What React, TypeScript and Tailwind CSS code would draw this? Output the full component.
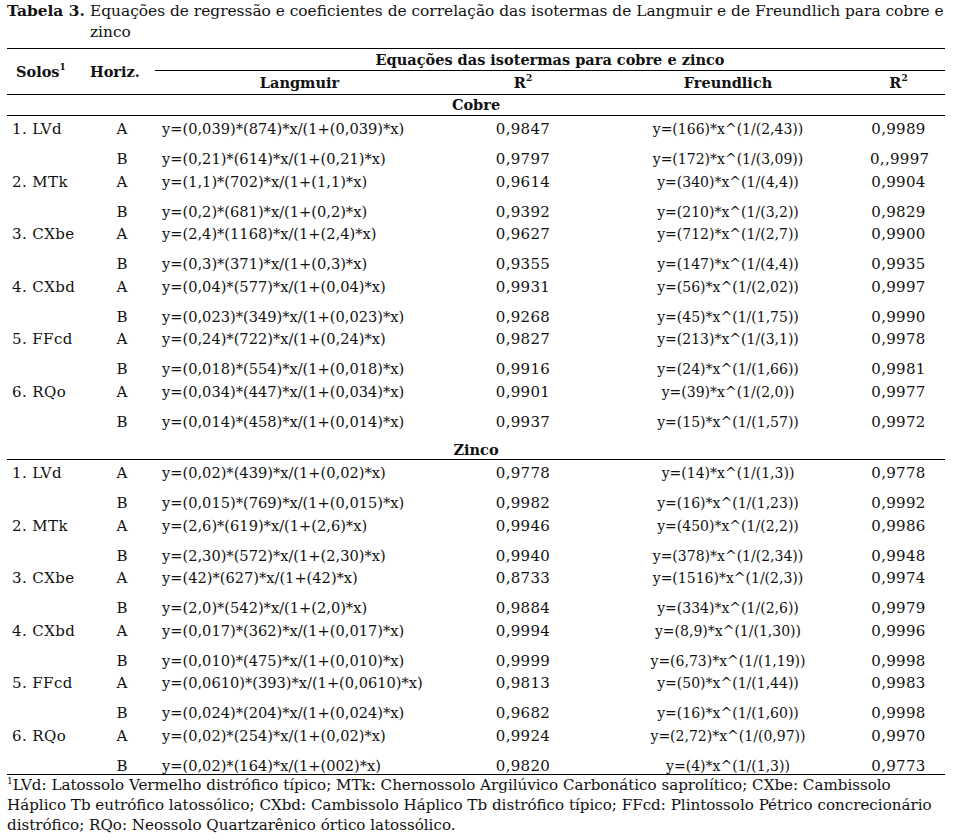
const serif = { fontFamily: '"DejaVu Serif", "Liberation Serif", serif' };

type Row = { solo?: string; h: string; lang: string; r1: string; freu: string; r2: string };

const cobre: Row[] = [
  { solo: "1. LVd", h: "A", lang: "y=(0,039)*(874)*x/(1+(0,039)*x)", r1: "0,9847", freu: "y=(166)*x^(1/(2,43))", r2: "0,9989" },
  { h: "B", lang: "y=(0,21)*(614)*x/(1+(0,21)*x)", r1: "0,9797", freu: "y=(172)*x^(1/(3,09))", r2: "0,,9997" },
  { solo: "2. MTk", h: "A", lang: "y=(1,1)*(702)*x/(1+(1,1)*x)", r1: "0,9614", freu: "y=(340)*x^(1/(4,4))", r2: "0,9904" },
  { h: "B", lang: "y=(0,2)*(681)*x/(1+(0,2)*x)", r1: "0,9392", freu: "y=(210)*x^(1/(3,2))", r2: "0,9829" },
  { solo: "3. CXbe", h: "A", lang: "y=(2,4)*(1168)*x/(1+(2,4)*x)", r1: "0,9627", freu: "y=(712)*x^(1/(2,7))", r2: "0,9900" },
  { h: "B", lang: "y=(0,3)*(371)*x/(1+(0,3)*x)", r1: "0,9355", freu: "y=(147)*x^(1/(4,4))", r2: "0,9935" },
  { solo: "4. CXbd", h: "A", lang: "y=(0,04)*(577)*x/(1+(0,04)*x)", r1: "0,9931", freu: "y=(56)*x^(1/(2,02))", r2: "0,9997" },
  { h: "B", lang: "y=(0,023)*(349)*x/(1+(0,023)*x)", r1: "0,9268", freu: "y=(45)*x^(1/(1,75))", r2: "0,9990" },
  { solo: "5. FFcd", h: "A", lang: "y=(0,24)*(722)*x/(1+(0,24)*x)", r1: "0,9827", freu: "y=(213)*x^(1/(3,1))", r2: "0,9978" },
  { h: "B", lang: "y=(0,018)*(554)*x/(1+(0,018)*x)", r1: "0,9916", freu: "y=(24)*x^(1/(1,66))", r2: "0,9981" },
  { solo: "6. RQo", h: "A", lang: "y=(0,034)*(447)*x/(1+(0,034)*x)", r1: "0,9901", freu: "y=(39)*x^(1/(2,0))", r2: "0,9977" },
  { h: "B", lang: "y=(0,014)*(458)*x/(1+(0,014)*x)", r1: "0,9937", freu: "y=(15)*x^(1/(1,57))", r2: "0,9972" },
];

const zinco: Row[] = [
  { solo: "1. LVd", h: "A", lang: "y=(0,02)*(439)*x/(1+(0,02)*x)", r1: "0,9778", freu: "y=(14)*x^(1/(1,3))", r2: "0,9778" },
  { h: "B", lang: "y=(0,015)*(769)*x/(1+(0,015)*x)", r1: "0,9982", freu: "y=(16)*x^(1/(1,23))", r2: "0,9992" },
  { solo: "2. MTk", h: "A", lang: "y=(2,6)*(619)*x/(1+(2,6)*x)", r1: "0,9946", freu: "y=(450)*x^(1/(2,2))", r2: "0,9986" },
  { h: "B", lang: "y=(2,30)*(572)*x/(1+(2,30)*x)", r1: "0,9940", freu: "y=(378)*x^(1/(2,34))", r2: "0,9948" },
  { solo: "3. CXbe", h: "A", lang: "y=(42)*(627)*x/(1+(42)*x)", r1: "0,8733", freu: "y=(1516)*x^(1/(2,3))", r2: "0,9974" },
  { h: "B", lang: "y=(2,0)*(542)*x/(1+(2,0)*x)", r1: "0,9884", freu: "y=(334)*x^(1/(2,6))", r2: "0,9979" },
  { solo: "4. CXbd", h: "A", lang: "y=(0,017)*(362)*x/(1+(0,017)*x)", r1: "0,9994", freu: "y=(8,9)*x^(1/(1,30))", r2: "0,9996" },
  { h: "B", lang: "y=(0,010)*(475)*x/(1+(0,010)*x)", r1: "0,9999", freu: "y=(6,73)*x^(1/(1,19))", r2: "0,9998" },
  { solo: "5. FFcd", h: "A", lang: "y=(0,0610)*(393)*x/(1+(0,0610)*x)", r1: "0,9813", freu: "y=(50)*x^(1/(1,44))", r2: "0,9983" },
  { h: "B", lang: "y=(0,024)*(204)*x/(1+(0,024)*x)", r1: "0,9682", freu: "y=(16)*x^(1/(1,60))", r2: "0,9998" },
  { solo: "6. RQo", h: "A", lang: "y=(0,02)*(254)*x/(1+(0,02)*x)", r1: "0,9924", freu: "y=(2,72)*x^(1/(0,97))", r2: "0,9970" },
  { h: "B", lang: "y=(0,02)*(164)*x/(1+(002)*x)", r1: "0,9820", freu: "y=(4)*x^(1/(1,3))", r2: "0,9773" },
];

const cols = "grid grid-cols-[78px_70px_305px_126px_284px_75px]";

function DataRow({ row }: { row: Row }) {
  const isB = row.h === "B";
  return (
    <div className={`${cols} items-center text-[15px] leading-[20px] ${isB ? "h-[26.5px] pt-[7px]" : "h-[26px]"}`}>
      <div className="pl-[5px] whitespace-nowrap tracking-[0.4px]">{row.solo ?? ""}</div>
      <div className="pl-[4px] text-center">{row.h}</div>
      <div className="pl-[7px] whitespace-nowrap text-[14.6px]">{row.lang}</div>
      <div className="text-center tracking-[0.3px]">{row.r1}</div>
      <div className="text-center whitespace-nowrap text-[14px]">{row.freu}</div>
      <div className="pr-[18px] text-center tracking-[0.3px]">{row.r2}</div>
    </div>
  );
}

export default function App() {
  return (
    <div className="w-[953px] h-[840px] bg-white text-[#111] overflow-hidden" style={serif}>
      <div className="flex pl-[7px] pt-[1px] text-[15.4px] leading-[21px]">
        <span className="font-bold w-[83px] shrink-0 whitespace-nowrap">Tabela 3.</span>
        <p className="w-[863px] whitespace-nowrap">
          Equações de regressão e coeficientes de correlação das isotermas de Langmuir e de Freundlich para cobre e
          <br />
          zinco
        </p>
      </div>

      <div className="ml-[7px] w-[938px] mt-[5px] text-[14.5px]">
        {/* header */}
        <div className="border-t-[1.5px] border-black">
          <div className={`${cols} font-bold`}>
            <div className="row-span-2 flex items-center pl-[9px]">
              Solos<sup className="text-[9px] -top-[5px]">1</sup>
            </div>
            <div className="row-span-2 flex items-center pl-[5px]">Horiz.</div>
            <div className="col-span-4 h-[22px] flex items-center justify-center border-b border-black whitespace-nowrap">
              Equações das isotermas para cobre e zinco
            </div>
            <div className="h-[23px] flex items-center justify-center pr-[16px]">Langmuir</div>
            <div className="h-[23px] flex items-center justify-center">
              R<sup className="text-[9px] -top-[5px]">2</sup>
            </div>
            <div className="h-[23px] flex items-center justify-center">Freundlich</div>
            <div className="h-[23px] flex items-center justify-center pr-[18px]">
              R<sup className="text-[9px] -top-[5px]">2</sup>
            </div>
          </div>
        </div>

        <div className="h-[22px] border-t border-b border-black flex items-center justify-center font-bold">
          Cobre
        </div>
        {cobre.map((r, i) => (
          <DataRow key={"c" + i} row={r} />
        ))}

        <div className="h-[29px] pt-[9px] border-b border-black flex items-center justify-center font-bold">
          Zinco
        </div>
        {zinco.map((r, i) => (
          <DataRow key={"z" + i} row={r} />
        ))}

        <div className="border-t-[1.5px] border-black text-[15.1px] leading-[20px] -mt-[1px] whitespace-nowrap">
          <p>
            <sup className="text-[9px] -top-[6px]">1</sup>LVd: Latossolo Vermelho distrófico típico; MTk: Chernossolo Argilúvico Carbonático saprolítico; CXbe: Cambissolo
            <br />
            Háplico Tb eutrófico latossólico; CXbd: Cambissolo Háplico Tb distrófico típico; FFcd: Plintossolo Pétrico concrecionário
            <br />
            distrófico; RQo: Neossolo Quartzarênico órtico latossólico.
          </p>
        </div>
      </div>
    </div>
  );
}
